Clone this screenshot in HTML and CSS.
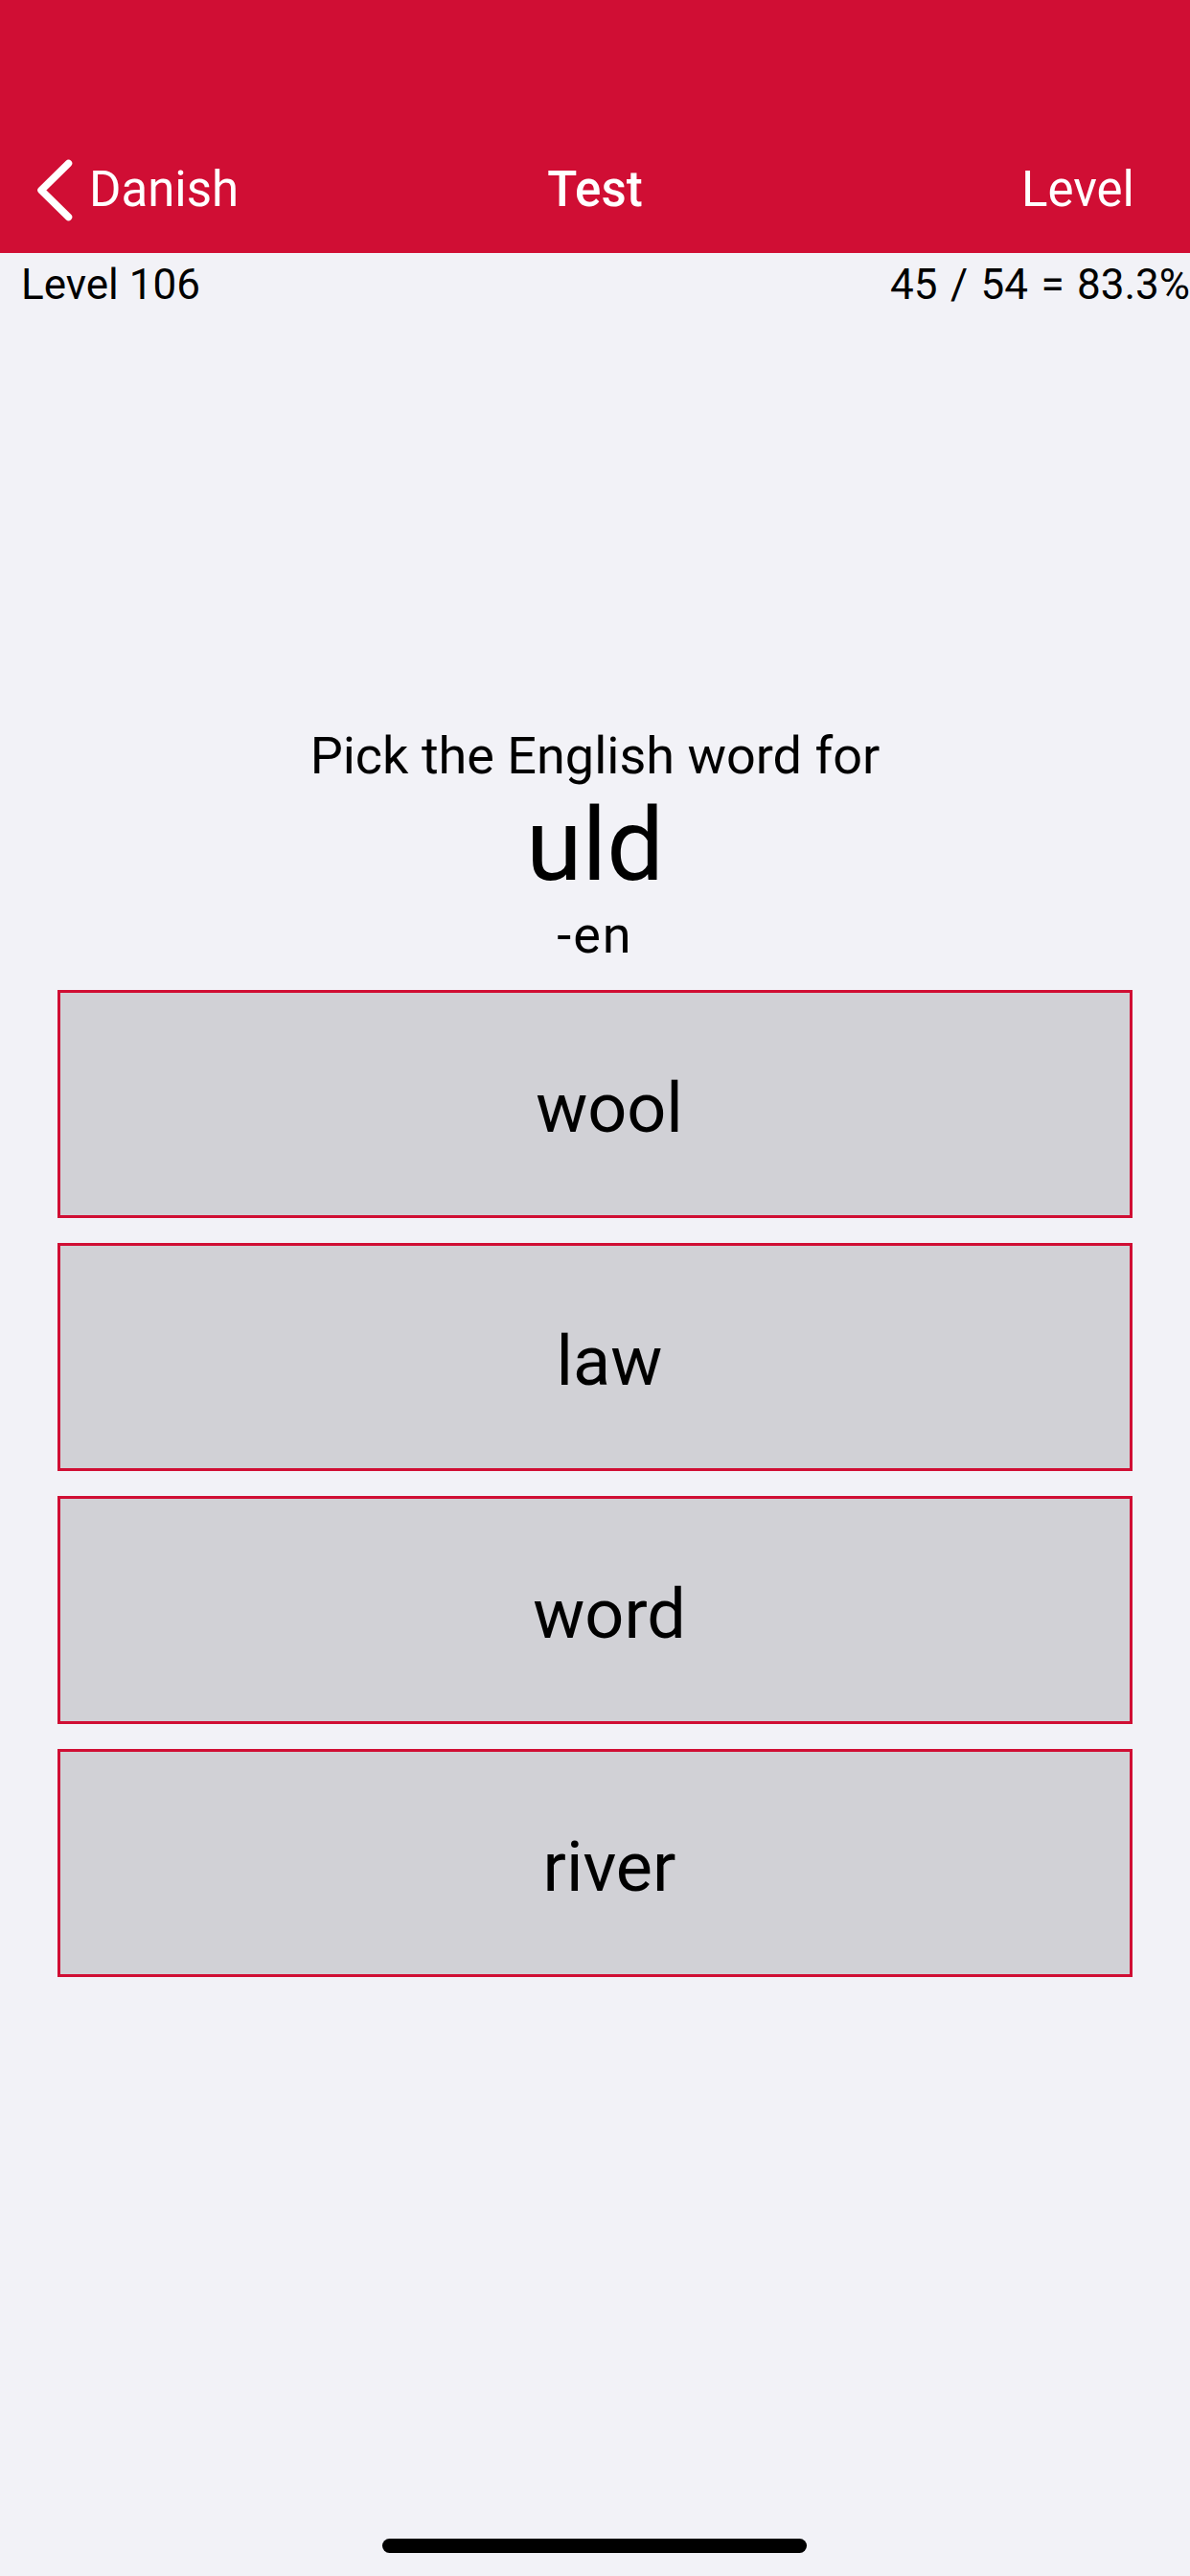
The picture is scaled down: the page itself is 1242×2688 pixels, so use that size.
FILE: index.html
```html
<!DOCTYPE html>
<html lang="en">
<head>
<meta charset="utf-8">
<title>Test</title>
<link rel="stylesheet" href="styles.css">
</head>
<body>
<div class="screen">
  <header class="navbar">
    <div class="status-area"></div>
    <div class="nav-row">
      <div class="nav-left">
        <svg class="back-chevron" width="44" height="68" viewBox="0 0 44 68" aria-hidden="true">
          <polyline points="39.5,6.5 11,34.5 39.5,62.5" fill="none" stroke="#ffffff" stroke-width="7.5" stroke-linecap="round" stroke-linejoin="round"/>
        </svg>
        <span class="nav-back-label">Danish</span>
      </div>
      <div class="nav-title">Test</div>
      <div class="nav-right">Level</div>
    </div>
  </header>

  <div class="stats">
    <span class="stats-level">Level 106</span>
    <span class="stats-score">45 / 54 = 83.3%</span>
  </div>

  <main class="quiz">
    <div class="prompt">
      <div class="prompt-question">Pick the English word for</div>
      <div class="prompt-word">uld</div>
      <div class="prompt-article">-en</div>
    </div>
    <div class="choices">
      <button class="choice">wool</button>
      <button class="choice">law</button>
      <button class="choice">word</button>
      <button class="choice">river</button>
    </div>
  </main>

  <div class="home-indicator"></div>
</div>
</body>
</html>
```

FILE: styles.css
```css
* {
  box-sizing: border-box;
}

html, body {
  margin: 0;
  padding: 0;
}

body {
  background: #f2f2f7;
  font-family: Roboto, "Liberation Sans", Arial, sans-serif;
  color: #000000;
}

.screen {
  width: 1242px;
  height: 2688px;
  display: flex;
  flex-direction: column;
  background: #f2f2f7;
  overflow: hidden;
}

/* ---------- navigation bar ---------- */
.navbar {
  background: #d00e34;
  color: #ffffff;
  height: 264px;
  display: flex;
  flex-direction: column;
}

.status-area {
  height: 132px;
}

.nav-row {
  height: 132px;
  display: grid;
  grid-template-columns: 1fr auto 1fr;
  align-items: center;
  font-size: 51px;
  line-height: 60px;
}

.nav-left {
  display: flex;
  align-items: center;
  gap: 17px;
  padding-left: 32px;
}

.back-chevron {
  display: block;
  flex: none;
}

.nav-back-label {
  font-weight: 400;
}

.nav-title {
  font-weight: 500;
  text-align: center;
}

.nav-right {
  text-align: right;
  padding-right: 58px;
}

/* ---------- stats row ---------- */
.stats {
  display: flex;
  justify-content: space-between;
  padding: 8px 0 0 22px;
  font-size: 44px;
  line-height: 50px;
  height: 58px;
}

.stats-score {
  white-space: nowrap;
  word-spacing: 2.5px;
}

/* ---------- quiz ---------- */
.quiz {
  display: flex;
  flex-direction: column;
  align-items: center;
  margin-top: 437px;
}

.prompt {
  display: flex;
  flex-direction: column;
  align-items: center;
  text-align: center;
}

.prompt-question {
  font-size: 54px;
  line-height: 60px;
  height: 60px;
}

.prompt-word {
  font-size: 106px;
  line-height: 126px;
  height: 126px;
}

.prompt-article {
  font-size: 54px;
  letter-spacing: 2px;
  line-height: 62px;
  height: 62px;
}

.choices {
  display: flex;
  flex-direction: column;
  gap: 26px;
  margin-top: 26px;
  width: 1122px;
}

.choice {
  display: flex;
  align-items: center;
  justify-content: center;
  height: 238px;
  width: 100%;
  margin: 0;
  padding: 8px 0 0 30px;
  background: #d1d1d6;
  border: 3px solid #d00e34;
  border-radius: 0;
  font-family: Roboto, "Liberation Sans", Arial, sans-serif;
  font-size: 72px;
  color: #000000;
  cursor: pointer;
}

/* ---------- home indicator ---------- */
.home-indicator {
  margin-top: auto;
  margin-bottom: 24px;
  margin-left: 399px;
  width: 443px;
  height: 15px;
  border-radius: 8px;
  background: #000000;
}
```
